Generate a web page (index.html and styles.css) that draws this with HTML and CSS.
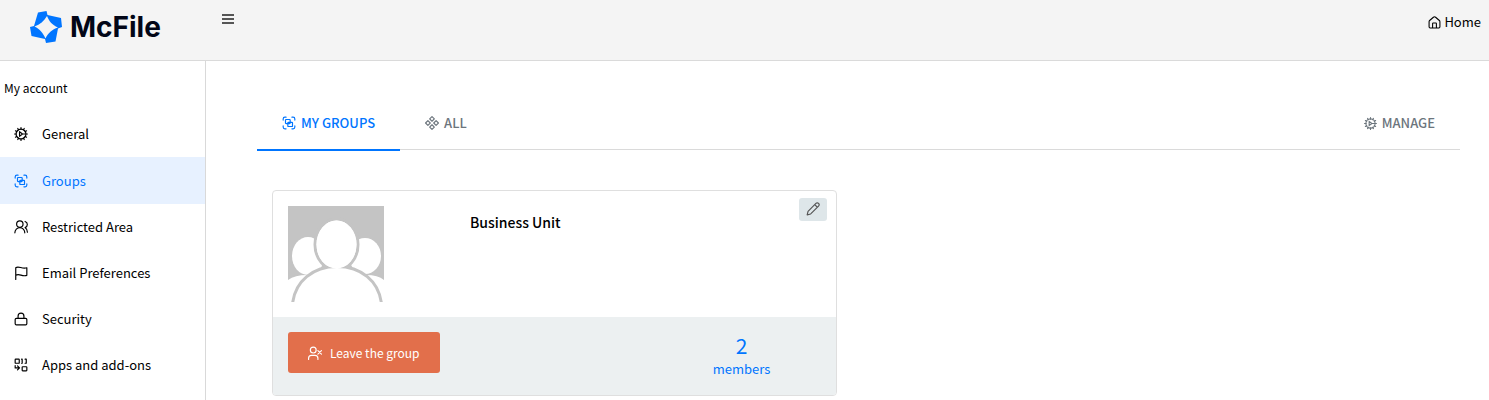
FILE: index.html
```html
<!DOCTYPE html>
<html lang="en">
<head>
<meta charset="utf-8">
<title>McFile - Groups</title>
<link rel="stylesheet" href="styles.css">
</head>
<body>
<svg class="sprite" aria-hidden="true">
  <symbol id="gear" viewBox="0 0 24 24"><circle cx="12" cy="12" r="8.500"/><path d="M12 1v3M12 20v3M1 12h3M20 12h3M6.500 2.500l1.500 2.600M16 18.900l1.500 2.600M21.500 6.500l-2.600 1.500M5.100 16l-2.600 1.500M17.500 2.500l-1.500 2.600M8 18.900l-1.500 2.600M2.500 6.500l2.600 1.500M18.900 16l2.600 1.500M9.500 8v8l5-4zM15 12h5"/></symbol>
  <symbol id="groups" viewBox="0 0 24 24"><path d="M2 7V5a3 3 0 0 1 3-3h2M17 2h2a3 3 0 0 1 3 3v2M22 17v2a3 3 0 0 1-3 3h-2M7 22H5a3 3 0 0 1-3-3v-2"/><rect x="6" y="6" width="8" height="7" rx="1"/><rect x="10" y="11" width="8" height="7" rx="1"/></symbol>
  <symbol id="users" viewBox="0 0 24 24"><circle cx="10" cy="7" r="5.500"/><path d="M18.500 22a8.500 9 0 0 0-17 0M23 21c0-3.400-2-6.500-4-8a5.500 5.500 0 0 0 0-10.500"/></symbol>
  <symbol id="flag" viewBox="0 0 24 24"><path d="M3 23V3c5-4 11 3 19 0v13c-8 3-13-4-19 0"/></symbol>
  <symbol id="lock" viewBox="0 0 24 24"><rect x="2" y="11" width="20" height="11" rx="2"/><path d="M7 11V7a5 5 0 0 1 10 0v4"/></symbol>
  <symbol id="apps" viewBox="0 0 24 24"><rect x="2" y="2" width="7" height="7" rx="1"/><rect x="14" y="15" width="8" height="7" rx="1"/><path d="M13 2h1v7h-1M19 2h2v7h-2M2 13v4h7M6 13.500L9.500 17L6 20.500"/></symbol>
  <symbol id="all" viewBox="0 0 24 24"><path d="M12 1l4 4l-4 4l-4-4zM12 15l4 4l-4 4l-4-4zM5 8l4 4l-4 4l-4-4zM19 8l4 4l-4 4l-4-4z"/></symbol>
  <symbol id="home" viewBox="0 0 24 24"><path d="M2 10.500a3 3 0 0 1 1-2.200l7-6a3 3 0 0 1 4 0l7 6a3 3 0 0 1 1 2.200V20a2 2 0 0 1-2 2H4a2 2 0 0 1-2-2zM8.500 22v-8a1 1 0 0 1 1-1h5a1 1 0 0 1 1 1v8"/></symbol>
  <symbol id="leave" viewBox="0 0 24 24"><circle cx="9" cy="7" r="5"/><path d="M1 23v-2a5 5 0 0 1 5-5h6a5 5 0 0 1 5 5v2M17 8l6 6M23 8l-6 6"/></symbol>
  <symbol id="pencil" viewBox="0 0 24 24"><path d="M2 22l1.500-6L17 2.500a2.800 2.800 0 0 1 4.500 4.500L8 20.500zM15 4.500l4.500 4.500"/></symbol>
</svg>

<header class="topbar">
  <a class="logo" href="#">
    <svg class="logo-mark" viewBox="0 0 32 32" aria-hidden="true">
      <path fill="#0075ff" d="M8 1.500L16.500 0L17.500 4L31 7L32 16L28 17.500L25.500 30.500L16 32L15 28L1.500 25L0 16L4 15Z"/>
      <path fill="#f4f4f4" d="M17 5C19 10 22 14 28 16.500C22 18.500 18 22 15.500 27.500C13 22 10 18 4.500 15.500C10 13.500 14 10 17 5Z"/>
    </svg>
    <span>McFile</span>
  </a>
  <button class="menu" type="button" aria-label="Toggle menu"><svg class="bars" viewBox="0 0 12 10"><path d="M0 1h12M0 5h12M0 9h12"/></svg></button>
  <a class="home" href="#"><svg class="icon"><use href="#home"/></svg>Home</a>
</header>

<div class="layout">
  <nav class="sidebar" aria-label="My account">
    <h2 class="sidebar-title">My account</h2>
    <a class="item" href="#"><svg class="icon"><use href="#gear"/></svg>General</a>
    <a class="item active" href="#" aria-current="page"><svg class="icon"><use href="#groups"/></svg>Groups</a>
    <a class="item" href="#"><svg class="icon"><use href="#users"/></svg>Restricted Area</a>
    <a class="item" href="#"><svg class="icon"><use href="#flag"/></svg>Email Preferences</a>
    <a class="item" href="#"><svg class="icon"><use href="#lock"/></svg>Security</a>
    <a class="item" href="#"><svg class="icon"><use href="#apps"/></svg>Apps and add-ons</a>
  </nav>

  <main class="content">
    <div class="tabs">
      <a class="tab selected" href="#"><svg class="icon"><use href="#groups"/></svg>MY GROUPS</a>
      <a class="tab" href="#"><svg class="icon"><use href="#all"/></svg>ALL</a>
      <a class="tab manage" href="#"><svg class="icon"><use href="#gear"/></svg>MANAGE</a>
    </div>
    <article class="card">
      <div class="card-body">
        <svg class="avatar" viewBox="0 0 96 96" role="img" aria-label="Group picture">
          <path fill="#c4c4c4" d="M0 0h96v96H0z"/>
          <g fill="#fff">
            <ellipse cx="20" cy="50" rx="16" ry="19"/><ellipse cx="77" cy="50" rx="16" ry="18"/>
            <path d="M0 74Q7 69 19 69L34 59L20 96H0zM96 74Q90 69 78 69L64 60L80 96H96z"/>
          </g>
          <g fill="#fff" stroke="#c4c4c4" stroke-width="3">
            <ellipse cx="48.500" cy="38.500" rx="21.500" ry="25.500"/>
            <path d="M4.500 98C7 75 25 60.500 49 60.500S91 75 93.500 98z"/>
          </g>
          <ellipse fill="#fff" cx="48.500" cy="38.500" rx="20" ry="24"/>
        </svg>
        <h3 class="card-title">Business Unit</h3>
        <button class="edit" type="button" aria-label="Edit group"><svg class="icon"><use href="#pencil"/></svg></button>
      </div>
      <div class="card-footer">
        <button class="leave" type="button"><svg class="icon"><use href="#leave"/></svg>Leave the group</button>
        <a class="members" href="#"><span class="count">2</span><span>members</span></a>
      </div>
    </article>
  </main>
</div>
</body>
</html>
```
FILE: styles.css
```css
* { box-sizing: border-box; }
body {
  margin: 0;
  min-height: 100vh;
  display: flex;
  flex-direction: column;
  background: #fff;
  color: #000;
  font: 13px/20px "Noto Sans CJK SC", "Open Sans", sans-serif;
}
a { color: inherit; text-decoration: none; }
button { font: inherit; border: 0; cursor: pointer; }
.sprite { position: absolute; width: 0; height: 0; }
.icon {
  width: 14px;
  height: 14px;
  flex: none;
  fill: none;
  stroke: currentColor;
  stroke-width: 2;
  stroke-linecap: round;
  stroke-linejoin: round;
}
.topbar {
  display: flex;
  align-items: flex-start;
  height: 61px;
  padding: 0 8px 0 30px;
  background: #f4f4f4;
  border-bottom: 1px solid #dadada;
}
.logo {
  display: flex;
  align-items: center;
  gap: 8px;
  width: 192px;
  height: 54px;
  color: #020617;
  font: 700 28px/32px Inter, sans-serif;
}
.logo-mark { width: 32px; height: 32px; }
.menu { display: flex; margin-top: 14px; padding: 0; background: none; }
.bars { width: 12px; height: 10px; fill: none; stroke: #555; stroke-width: 2; }
.home { display: flex; align-items: center; gap: 3px; margin: 12px 0 0 auto; }
.home .icon { width: 13px; height: 13px; }

.layout { display: flex; flex: 1; }
.sidebar { width: 206px; flex: none; border-right: 1px solid #d9d9d9; }
.sidebar-title { margin: 0; padding: 17px 4px 13px; font-size: 12px; font-weight: 400; }
.item { display: flex; align-items: center; gap: 14px; height: 46px; padding: 0 14px; }
.item.active { height: 47px; background: #e7f1ff; color: #0075ff; }

.content { flex: 1; padding: 36px 29px 4px 51px; }
.tabs { display: flex; border-bottom: 1px solid #dadada; color: #6c757d; font-weight: 500; }
.tab { display: flex; align-items: center; gap: 5px; height: 52px; padding: 0 25px; }
.tab.selected { height: 54px; margin-bottom: -2px; border-bottom: 2px solid #0075ff; color: #0075ff; }
.manage { margin-left: auto; }
.manage .icon { width: 13px; height: 13px; }

.card { width: 47%; margin: 40px 0 0 15px; border: 1px solid #dfdfdf; border-radius: 4px; overflow: hidden; }
.card-body { display: flex; align-items: flex-start; height: 126px; padding: 15px; }
.avatar { width: 96px; height: 96px; flex: none; }
.card-title { flex: 1; margin: 6px 0 0 86px; font-size: 14px; font-weight: 500; }
.edit {
  display: flex;
  justify-content: center;
  width: 28px;
  height: 23px;
  margin: -8px -6px 0 0;
  padding: 4px 0;
  border-radius: 3px;
  background: #dee6e9;
  color: #555;
}
.card-footer { display: flex; align-items: flex-start; justify-content: space-between; padding: 15px 66px 16px 15px; background: #ecf0f1; }
.leave {
  display: flex;
  align-items: center;
  gap: 8px;
  height: 41px;
  padding: 0 20px;
  border-radius: 3px;
  background: #e26f4b;
  color: #fff;
  font-size: 12px;
}
.members { display: flex; flex-direction: column; align-items: center; color: #0075ff; }
.count { font-size: 21px; line-height: 27px; }
```
